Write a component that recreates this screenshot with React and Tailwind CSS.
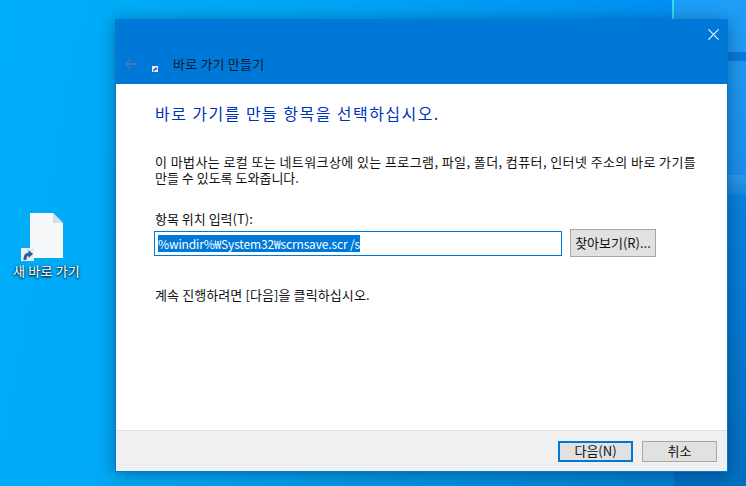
const font = { fontFamily: '"Noto Sans CJK KR", "Noto Sans", sans-serif' };

const ShortcutArrow = ({ className }) => (
  <svg viewBox="0 0 13 13" className={className}>
    <rect x="0" y="0" width="13" height="13" fill="#e6edf4" />
    <path d="M2.5 12 C2.5 7 4.5 4.8 7.5 4.8 L7.5 2 L12 6 L7.5 10 L7.5 7.8 C6 7.8 5.5 9.5 5.5 12 Z" fill="#2b5c9c" />
  </svg>
);

const WinButton = ({ children, primary, className = "" }) => (
  <button
    className={`flex items-center justify-center bg-[#e1e1e1] text-[13px] text-[#111] ${
      primary ? "border-2 border-[#0078d7]" : "border border-[#a8a8a8]"
    } ${className}`}
  >
    {children}
  </button>
);

export default function App() {
  return (
    <div
      style={font}
      className="relative w-[746px] h-[486px] overflow-hidden bg-[linear-gradient(100deg,#00aff9_0%,#00a6f5_30%,#0090e0_65%,#0079cc_100%)]"
    >
      {/* wallpaper panes */}
      <div className="absolute left-0 top-0 w-[674px] h-[19px] bg-gradient-to-r from-[#00aff9] via-[#00a4f5] to-[#008ff2]" />
      <div className="absolute left-[674px] top-0 w-[72px] h-[175px] bg-gradient-to-b from-[#1f9ef9] to-[#1c8ee8]" />
      <div className="absolute left-[674px] top-[175px] w-[72px] h-[20px] bg-gradient-to-b from-[#2a9cec] to-[#1784e0]" />
      <div className="absolute left-[674px] top-[195px] w-[72px] h-[291px] bg-gradient-to-b from-[#0a80de] to-[#006fc2]" />
      <div className="absolute left-[672px] top-0 w-[2px] h-[19px] bg-[#2de0e8]" />
      <div className="absolute left-[674px] top-[52px] w-[72px] h-[9px] bg-[#0a78dc]" />

      {/* desktop icon */}
      <div className="absolute left-[8px] top-[213px] w-[77px] flex flex-col items-center">
        <div className="relative w-[33px] h-[45px]">
          <svg viewBox="0 0 33 45" className="w-[33px] h-[45px]">
            <path d="M0 0 H23 L33 10 V45 H0 Z" fill="#f6f8fa" />
            <path d="M23 0 L33 10 H23 Z" fill="#d9dee3" />
          </svg>
          <ShortcutArrow className="absolute left-[-9px] top-[35px] w-[13px] h-[13px]" />
        </div>
        <span className="text-[13px] leading-[16px] mt-[5px] tracking-[0.2px] text-white whitespace-nowrap [text-shadow:0_1px_2px_#000,0_0_3px_#00000099]">
          새 바로 가기
        </span>
      </div>

      {/* wizard window */}
      <div className="absolute left-[115px] top-[19px] w-[613px] h-[453px] flex flex-col bg-white border border-[#0078d7] border-t-0 shadow-[0_2px_16px_rgba(0,0,0,0.35)]">
        <div className="h-[65px] shrink-0 bg-[#0078d7] relative">
          <svg viewBox="0 0 12 12" className="absolute left-[592px] top-[10px] w-[11px] h-[11px]">
            <path d="M0.5 0.5 L11.5 11.5 M11.5 0.5 L0.5 11.5" stroke="#fff" strokeWidth="1.1" fill="none" />
          </svg>
          <svg viewBox="0 0 14 12" className="absolute left-[8px] top-[39px] w-[13px] h-[12px]">
            <path d="M13.5 6 H2 M6.5 1.2 L1.8 6 L6.5 10.8" stroke="#3f7bb5" strokeWidth="2" fill="none" />
          </svg>
          <ShortcutArrow className="absolute left-[36px] top-[47px] w-[6px] h-[6px]" />
          <span className="absolute left-[57px] top-[36px] text-[13px] leading-[18px] tracking-[0.2px] text-[#0a1a2e]">
            바로 가기 만들기
          </span>
        </div>

        <div className="flex-1 flex flex-col pl-[39px]">
          <h1 className="mt-[18px] text-[16px] leading-[22px] font-normal text-[#0033bc] tracking-[1.45px]">
            바로 가기를 만들 항목을 선택하십시오.
          </h1>
          <p className="mt-[30px] text-[13px] leading-[16px] tracking-[0.4px] text-[#111] whitespace-nowrap">
            이 마법사는 로컬 또는 네트워크상에 있는 프로그램, 파일, 폴더, 컴퓨터, 인터넷 주소의 바로 가기를
          </p>
          <p className="text-[13px] leading-[16px] text-[#111] whitespace-nowrap">만들 수 있도록 도와줍니다.</p>
          <label className="mt-[25px] text-[13px] leading-[16px] text-[#111]">항목 위치 입력(T):</label>
          <div className="mt-[2px] ml-[-1px] flex items-start gap-[8px]">
            <div className="mt-[2px] w-[408px] h-[25px] border border-[#0078d7] flex items-center px-[3px]">
              <span className="bg-[#0078d7] text-white text-[12px] leading-[17px] tracking-[-0.15px] whitespace-nowrap">
                %windir%₩System32₩scrnsave.scr /s
              </span>
            </div>
            <WinButton className="w-[86px] h-[28px]">찾아보기(R)...</WinButton>
          </div>
          <p className="mt-[30px] text-[13px] leading-[16px] tracking-[0.1px] text-[#111]">
            계속 진행하려면 [다음]을 클릭하십시오.
          </p>
        </div>

        <div className="h-[41px] shrink-0 bg-[#f0f0f0] border-t border-[#dfdfdf] flex items-center justify-end gap-[9px] pr-[10px]">
          <WinButton primary className="w-[75px] h-[21px]">다음(N)</WinButton>
          <WinButton className="w-[75px] h-[21px]">취소</WinButton>
        </div>
      </div>
    </div>
  );
}
